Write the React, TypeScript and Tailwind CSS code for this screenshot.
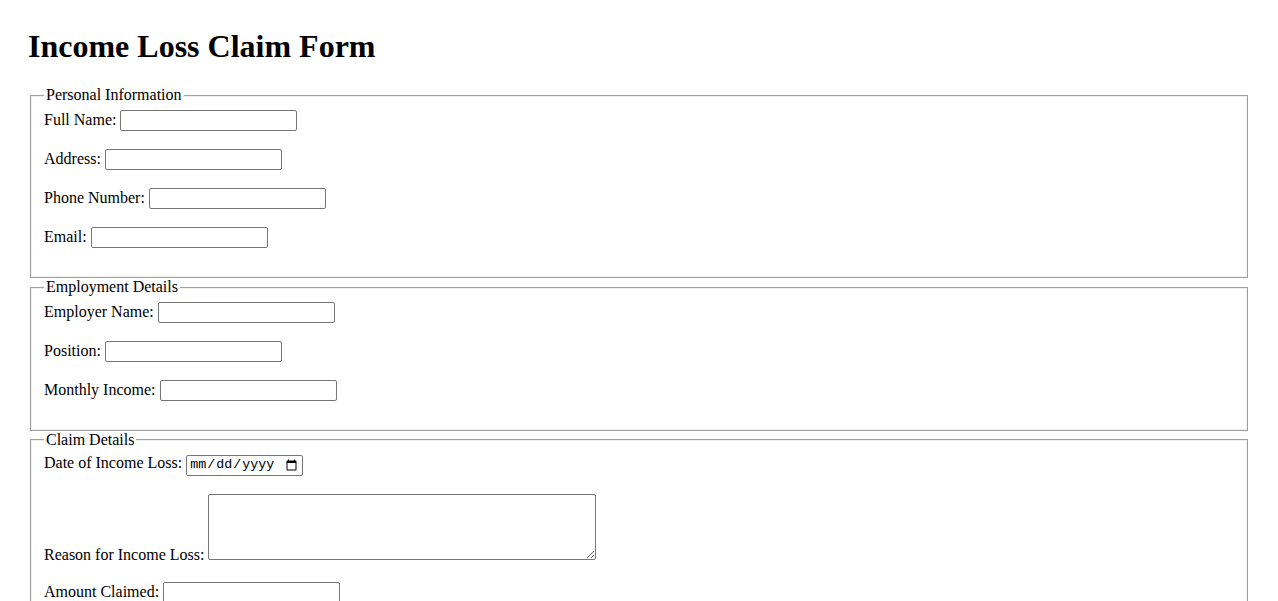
import React from "react";

const inputCls =
  "align-baseline h-[21px] w-[177px] border border-solid border-[#767676] rounded-[2px] bg-white px-[2px] py-[1px] text-[13.33px] [font-family:Arial,'Liberation_Sans',sans-serif]";

function Row({ label, children }: { label: string; children: React.ReactNode }) {
  return (
    <div className="mb-[18px]">
      <label>{label} </label>
      {children}
    </div>
  );
}

function Field({ legend, children }: { legend: string; children: React.ReactNode }) {
  return (
    <fieldset className="mx-[2px] px-[13px] pt-[5.6px] pb-[11px] border border-solid border-[#a0a0a0] shadow-[inset_0_0_0_1px_#f0f0f0] min-w-0">
      <legend className="px-[2px]">{legend}</legend>
      {children}
    </fieldset>
  );
}

export default function App() {
  return (
    <div className="bg-white text-black text-[16px] leading-[18px] [font-family:'Liberation_Serif','Times_New_Roman',serif] px-[28px] pt-[28px] pb-[28px] min-h-screen">
      <h1 className="text-[32px] font-bold leading-[37px] mb-[21.44px]">Income Loss Claim Form</h1>
      <form>
        <Field legend="Personal Information">
          <Row label="Full Name:">
            <input type="text" className={inputCls} />
          </Row>
          <Row label="Address:">
            <input type="text" className={inputCls} />
          </Row>
          <Row label="Phone Number:">
            <input type="tel" className={inputCls} />
          </Row>
          <Row label="Email:">
            <input type="email" className={inputCls} />
          </Row>
        </Field>
        <Field legend="Employment Details">
          <Row label="Employer Name:">
            <input type="text" className={inputCls} />
          </Row>
          <Row label="Position:">
            <input type="text" className={inputCls} />
          </Row>
          <Row label="Monthly Income:">
            <input type="number" className={inputCls} />
          </Row>
        </Field>
        <Field legend="Claim Details">
          <Row label="Date of Income Loss:">
            <input
              type="date"
              className="align-baseline h-[21px] w-[117px] border border-solid border-[#767676] rounded-[2px] bg-white px-[2px] py-[1px] text-[13.33px] [font-family:'Liberation_Mono',monospace]"
            />
          </Row>
          <Row label="Reason for Income Loss:">
            <textarea className="align-baseline h-[66px] w-[388px] border border-solid border-[#767676] rounded-[2px] bg-white px-[2px] py-[2px] text-[13.33px] [font-family:'Liberation_Mono',monospace]" />
          </Row>
          <Row label="Amount Claimed:">
            <input type="number" className={inputCls} />
          </Row>
        </Field>
      </form>
    </div>
  );
}
